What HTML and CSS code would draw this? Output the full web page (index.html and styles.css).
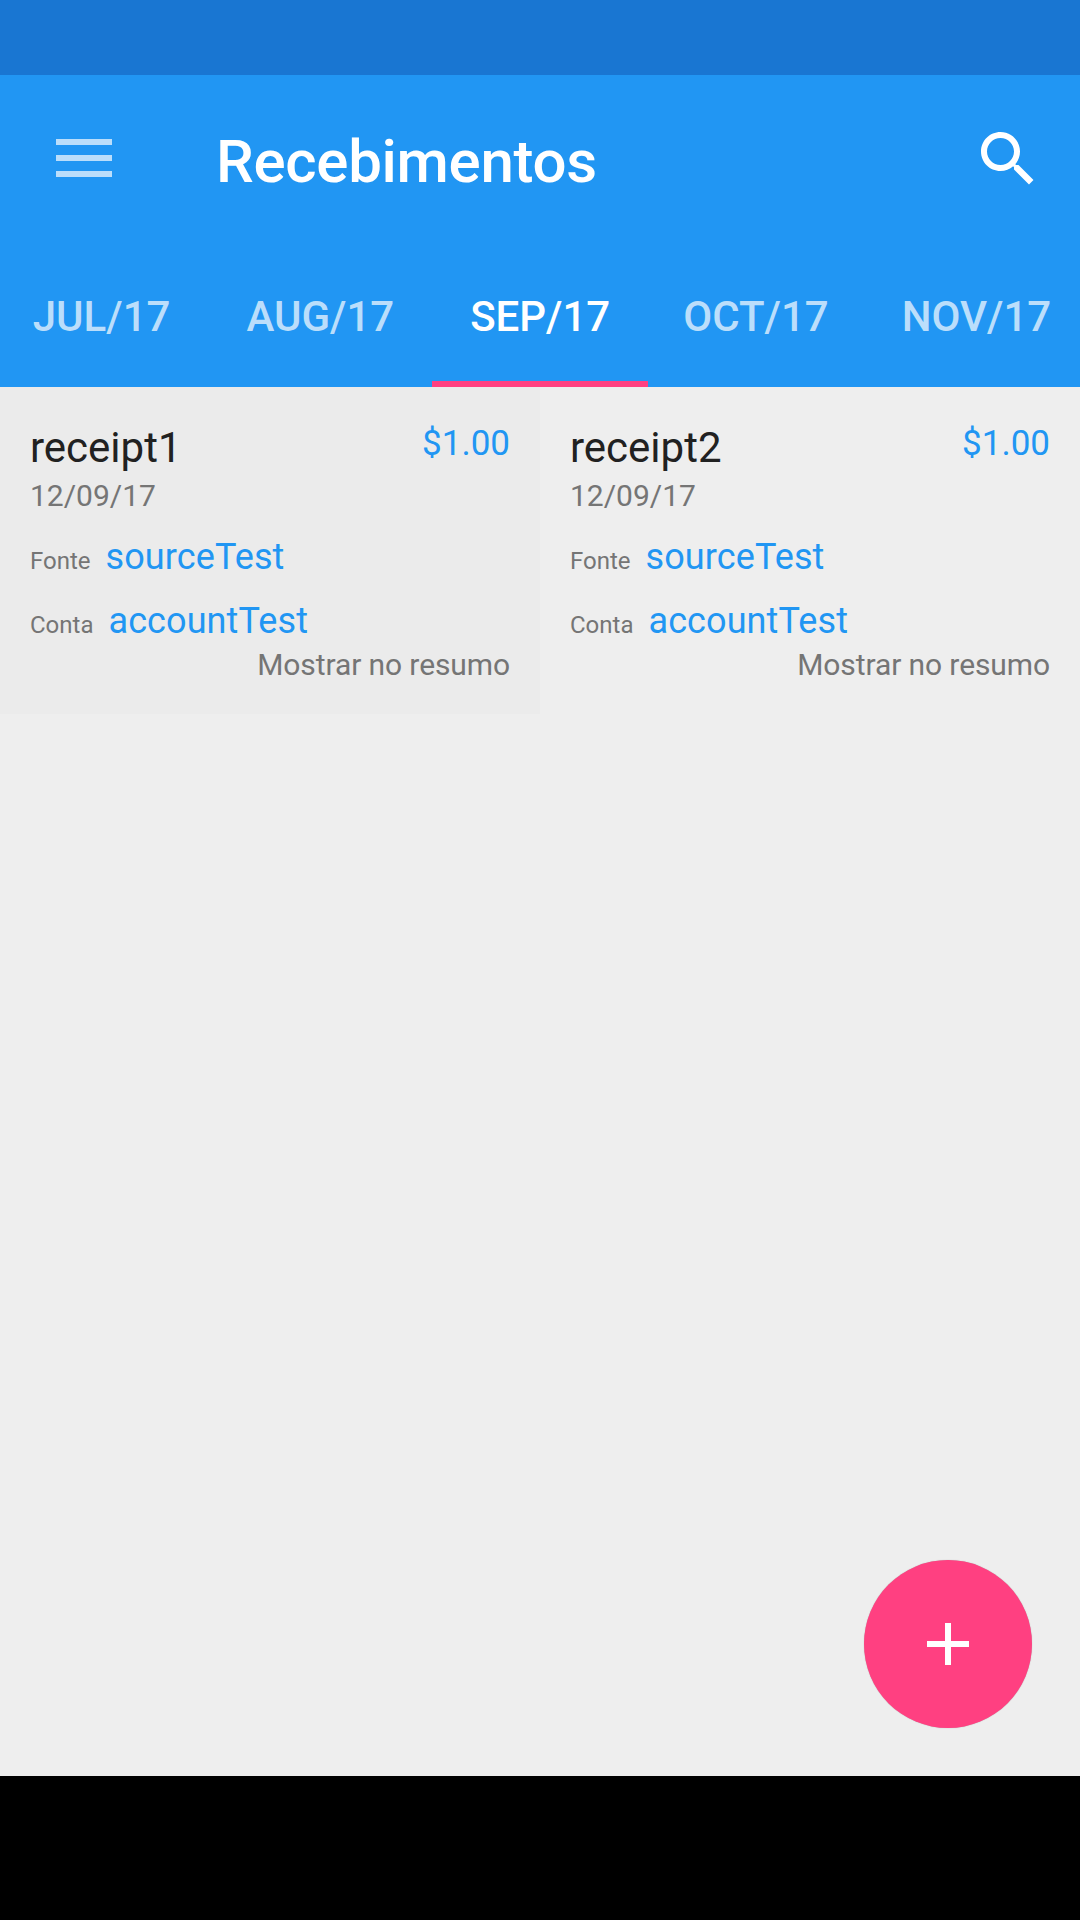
FILE: index.html
```html
<!DOCTYPE html>
<html lang="pt">
  <head>
    <meta charset="UTF-8" />
    <meta name="viewport" content="width=device-width, initial-scale=1.0" />
    <title>Recebimentos</title>
    <link rel="stylesheet" href="styles.css">
  </head>
  <body>
    <div id="main">
      <div class="status-bar"></div>

      <header class="app-bar">
        <div class="toolbar">
          <button class="menu-button" aria-label="Menu">
            <span></span>
            <span></span>
            <span></span>
          </button>
          <h1 class="title">Recebimentos</h1>
          <svg class="search-icon" viewBox="0 0 24 24" width="72" height="72">
            <path d="M15.5 14h-.79l-.28-.27C15.41 12.59 16 11.11 16 9.5 16 5.91 13.09 3 9.5 3S3 5.91 3 9.5 5.91 16 9.5 16c1.61 0 3.09-.59 4.23-1.57l.27.28v.79l5 4.99L20.49 19l-4.99-5zm-6 0C7.01 14 5 11.99 5 9.5S7.01 5 9.5 5 14 7.01 14 9.5 11.99 14 9.5 14z" />
          </svg>
        </div>
        <nav class="tabs">
          <a class="tab">JUL/17</a>
          <a class="tab">AUG/17</a>
          <a class="tab tab-active">SEP/17</a>
          <a class="tab tab-tight">OCT/17</a>
          <a class="tab tab-tight">NOV/17</a>
        </nav>
      </header>

      <main class="content">
        <article class="receipt receipt-pressed">
          <div class="receipt-head">
            <div>
              <div class="receipt-name">receipt1</div>
              <div class="receipt-date">12/09/17</div>
            </div>
            <div class="receipt-price">$1.00</div>
          </div>
          <p class="receipt-row"><span class="row-label">Fonte</span> <span class="row-value">sourceTest</span></p>
          <p class="receipt-row"><span class="row-label">Conta</span> <span class="row-value">accountTest</span></p>
          <div class="receipt-note">Mostrar no resumo</div>
        </article>

        <article class="receipt">
          <div class="receipt-head">
            <div>
              <div class="receipt-name">receipt2</div>
              <div class="receipt-date">12/09/17</div>
            </div>
            <div class="receipt-price">$1.00</div>
          </div>
          <p class="receipt-row"><span class="row-label">Fonte</span> <span class="row-value">sourceTest</span></p>
          <p class="receipt-row"><span class="row-label">Conta</span> <span class="row-value">accountTest</span></p>
          <div class="receipt-note">Mostrar no resumo</div>
        </article>

        <button class="fab" aria-label="Adicionar">
          <svg viewBox="0 0 42 42" width="42" height="42">
            <rect x="18" y="0" width="6" height="42" />
            <rect x="0" y="18" width="42" height="6" />
          </svg>
        </button>
      </main>

      <div class="nav-bar"></div>
    </div>
  </body>
</html>
```

FILE: styles.css
```css
body {
  font-family: 'Roboto', sans-serif;
  margin: 0;
  padding: 0;
  background-color: #eee;
}

#main {
  display: flex;
  flex-direction: column;
  height: 1920px;
  overflow: hidden;
}

.status-bar {
  height: 75px;
  background-color: #1976d2;
}

.app-bar {
  background-color: #2196f3;
  height: 312px;
  display: flex;
  flex-direction: column;
}

.toolbar {
  display: flex;
  align-items: center;
  height: 168px;
  padding-left: 56px;
  padding-right: 36px;
}

.menu-button {
  display: flex;
  flex-direction: column;
  gap: 10px;
  width: 56px;
  margin-bottom: 2px;
  padding: 0;
  border: 0;
  background: none;
}

.menu-button span {
  display: block;
  height: 6px;
  background-color: #bbdefb;
}

.title {
  flex: 1;
  margin: 4px 0 0 104px;
  color: #fff;
  font-size: 60px;
  font-weight: 500;
  letter-spacing: -0.3px;
}

.search-icon {
  fill: #fff;
}

.tabs {
  display: flex;
  justify-content: center;
  flex: 1;
  padding-left: 4px;
}

.tab {
  flex-shrink: 0;
  display: flex;
  align-items: center;
  padding: 9px 38px 0;
  color: #bbdefb;
  font-size: 42px;
  font-weight: 500;
  border-bottom: 6px solid transparent;
}

.tab-tight {
  margin-left: -3px;
}

.tab-active {
  color: #fff;
  border-bottom-color: #ff4081;
}

.content {
  position: relative;
  flex: 1;
  display: grid;
  grid-template-columns: 1fr 1fr;
  align-items: start;
}

.receipt {
  height: 327px;
  box-sizing: border-box;
  padding: 33px 30px 0;
}

.receipt-pressed {
  background-color: #ebebeb;
}

.receipt-head {
  display: flex;
  justify-content: space-between;
}

.receipt-name {
  color: #212121;
  font-size: 42px;
  line-height: 56px;
}

.receipt-date {
  color: #757575;
  font-size: 30px;
  line-height: 39px;
}

.receipt-price {
  color: #2196f3;
  font-size: 35px;
  line-height: 48px;
}

.receipt-row {
  margin: 21px 0 0;
  display: flex;
  align-items: baseline;
  gap: 15px;
  height: 43px;
}

.row-label {
  color: #757575;
  font-size: 24px;
}

.row-value {
  color: #2196f3;
  font-size: 36px;
  letter-spacing: 0.1px;
}

.receipt-note {
  margin-top: 4px;
  text-align: right;
  color: #757575;
  font-size: 30px;
  letter-spacing: -0.1px;
}

.fab {
  position: absolute;
  right: 48px;
  bottom: 48px;
  width: 168px;
  height: 168px;
  padding: 0;
  border: 0;
  border-radius: 50%;
  background-color: #ff4081;
  box-shadow: 0 0 1px rgba(0, 0, 0, 0.3);
  display: flex;
  align-items: center;
  justify-content: center;
}

.fab svg {
  fill: #fff;
}

.nav-bar {
  height: 144px;
  background-color: #000;
}
```
